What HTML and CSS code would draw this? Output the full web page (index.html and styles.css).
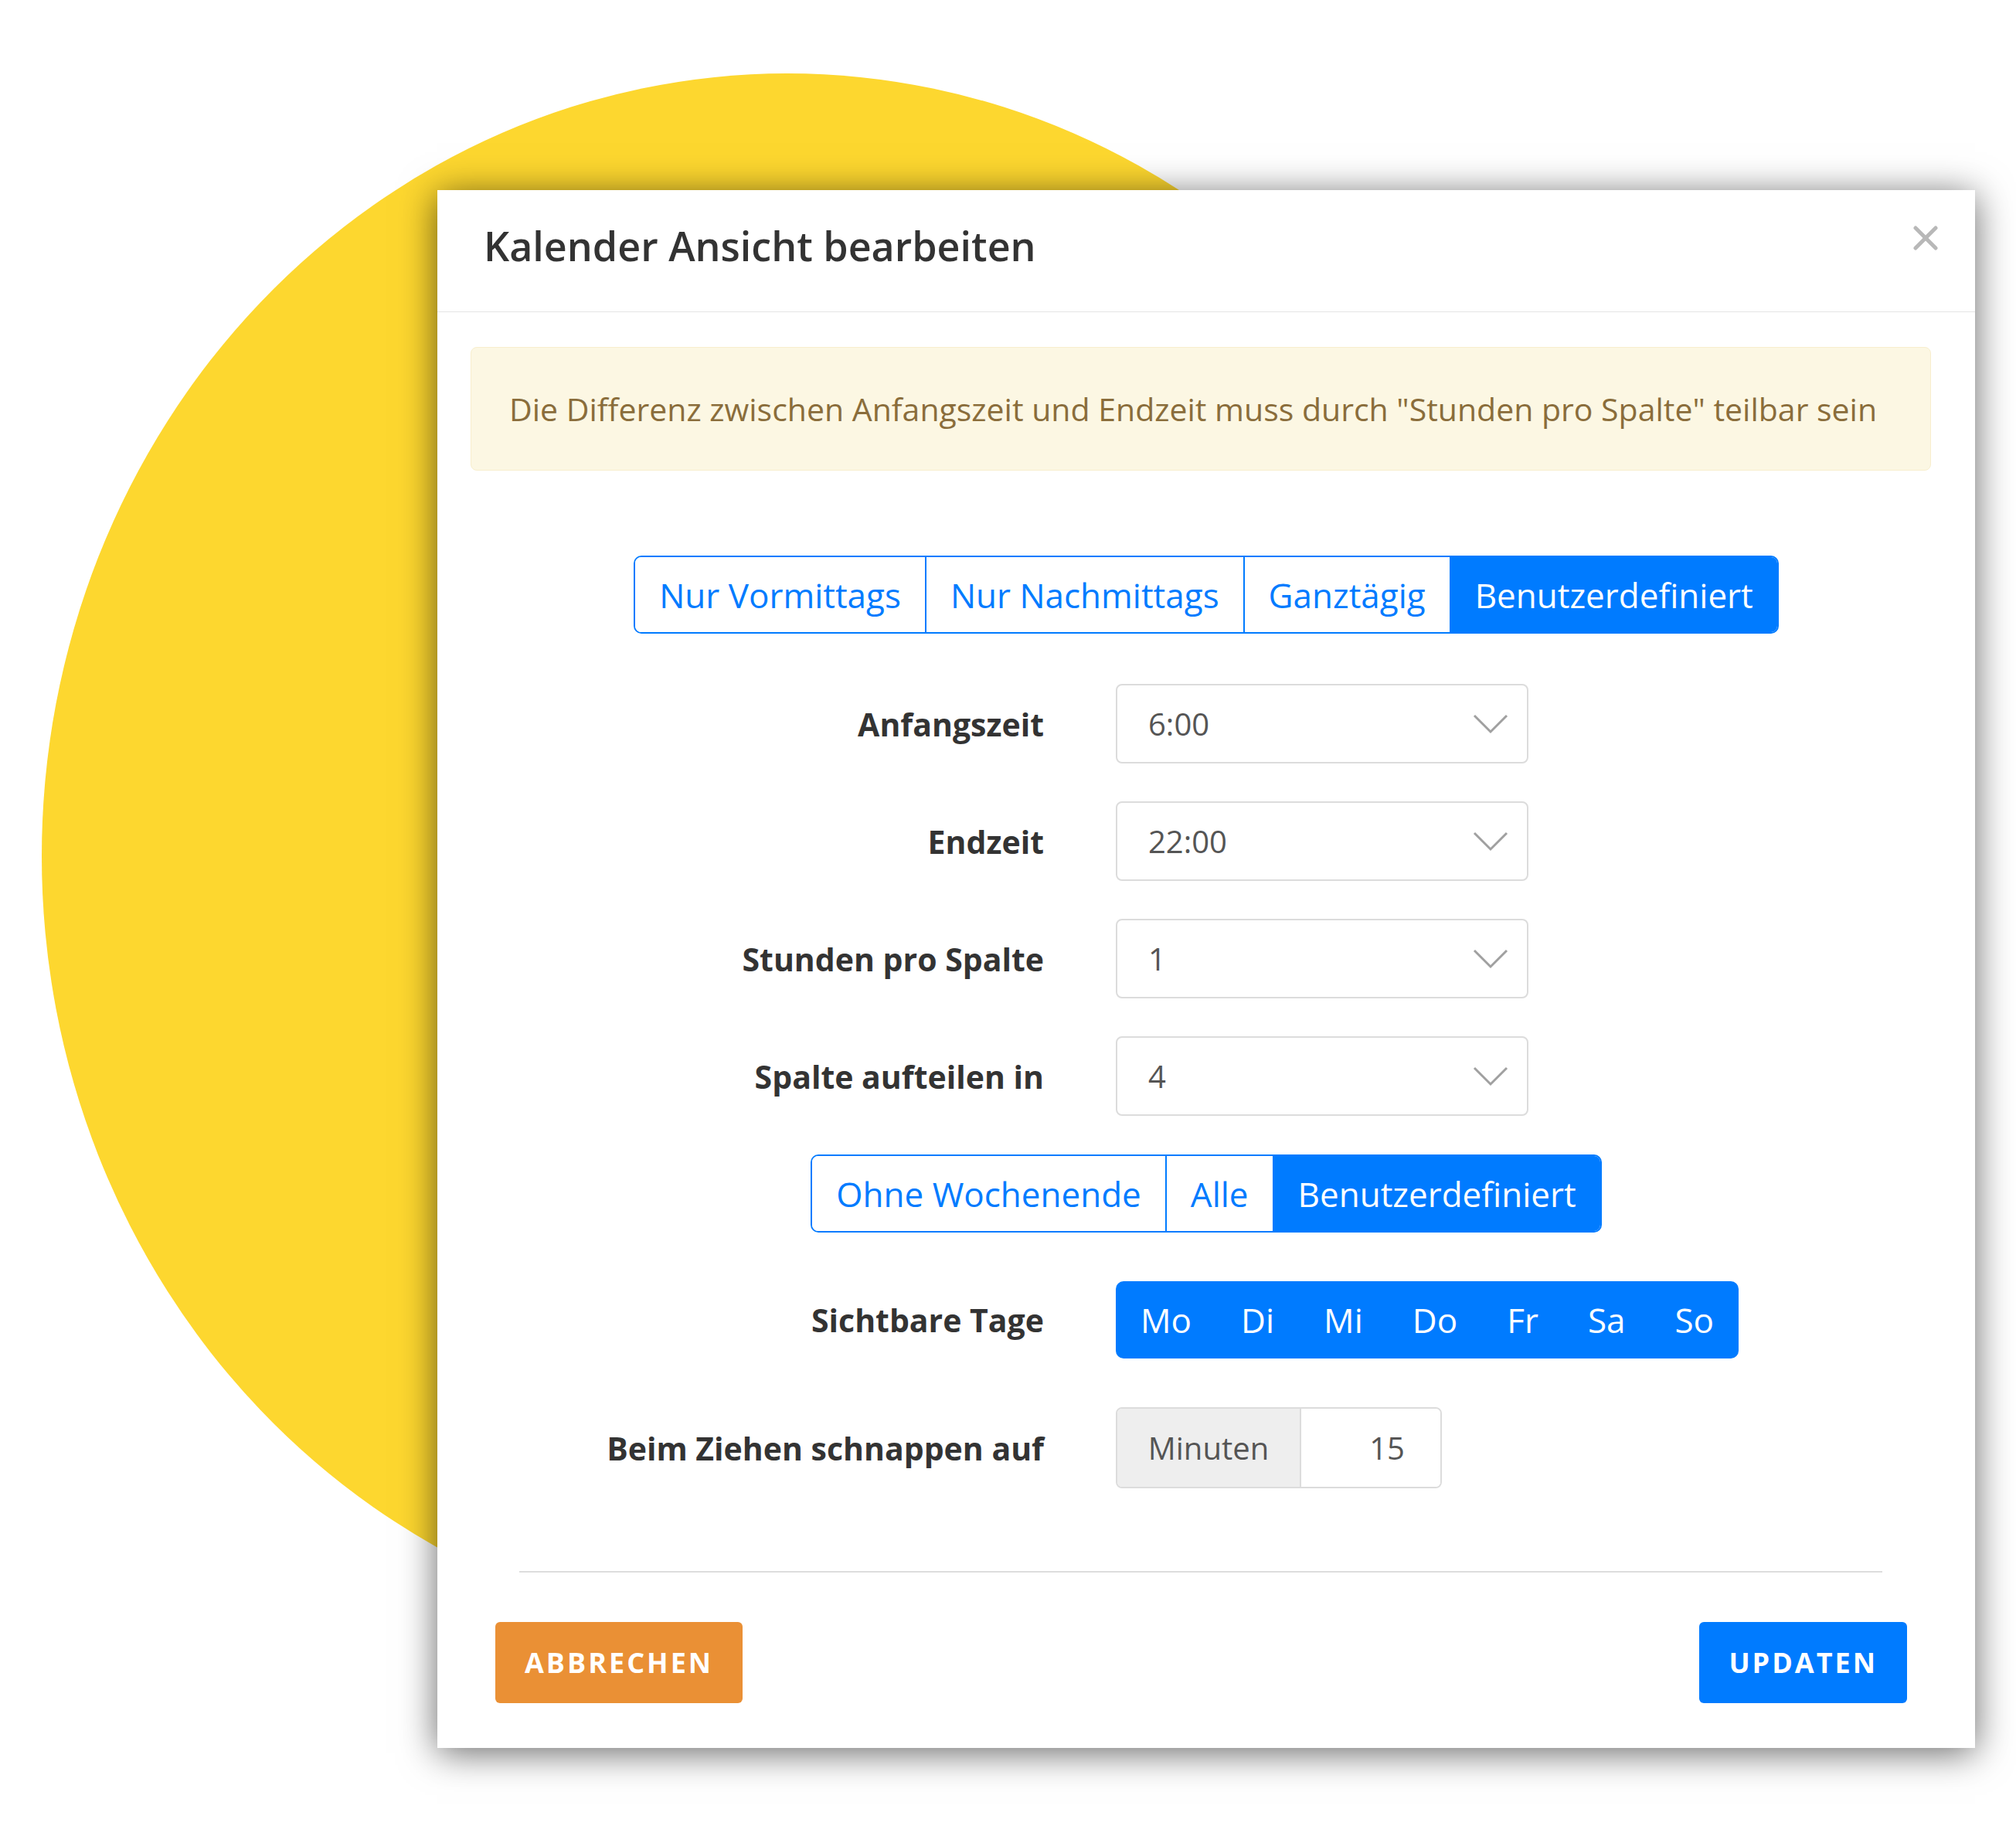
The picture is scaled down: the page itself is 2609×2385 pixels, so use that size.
FILE: index.html
```html
<!DOCTYPE html>
<html lang="de">
<head>
    <meta charset="UTF-8">
    <meta name="viewport" content="width=device-width, initial-scale=1.0">
    <title>Kalender Ansicht bearbeiten</title>
    <link rel="stylesheet" href="styles.css">
</head>
<body>
    <div class="stage">
        <div class="blob"></div>

        <div class="modal">
            <div class="modal-header">
                <h4 class="modal-title">Kalender Ansicht bearbeiten</h4>
                <button class="close" type="button" aria-label="Schließen">
                    <svg width="32" height="32" viewBox="0 0 32 32">
                        <line x1="3" y1="3" x2="29" y2="29" />
                        <line x1="29" y1="3" x2="3" y2="29" />
                    </svg>
                </button>
            </div>

            <div class="modal-body">
                <div class="alert">Die Differenz zwischen Anfangszeit und Endzeit muss durch "Stunden pro Spalte" teilbar sein</div>

                <div class="btn-row presets">
                    <div class="btn-group">
                        <button class="btn-outline">Nur Vormittags</button>
                        <button class="btn-outline">Nur Nachmittags</button>
                        <button class="btn-outline">Ganztägig</button>
                        <button class="btn-outline active">Benutzerdefiniert</button>
                    </div>
                </div>

                <div class="fields">
                    <div class="field">
                        <label>Anfangszeit</label>
                        <div class="select">
                            <span>6:00</span>
                            <svg class="chevron" width="46" height="26" viewBox="0 0 46 26"><polyline points="2,2 23,23 44,2" /></svg>
                        </div>
                    </div>
                    <div class="field">
                        <label>Endzeit</label>
                        <div class="select">
                            <span>22:00</span>
                            <svg class="chevron" width="46" height="26" viewBox="0 0 46 26"><polyline points="2,2 23,23 44,2" /></svg>
                        </div>
                    </div>
                    <div class="field">
                        <label>Stunden pro Spalte</label>
                        <div class="select">
                            <span>1</span>
                            <svg class="chevron" width="46" height="26" viewBox="0 0 46 26"><polyline points="2,2 23,23 44,2" /></svg>
                        </div>
                    </div>
                    <div class="field">
                        <label>Spalte aufteilen in</label>
                        <div class="select">
                            <span>4</span>
                            <svg class="chevron" width="46" height="26" viewBox="0 0 46 26"><polyline points="2,2 23,23 44,2" /></svg>
                        </div>
                    </div>
                </div>

                <div class="btn-row weekmode">
                    <div class="btn-group">
                        <button class="btn-outline">Ohne Wochenende</button>
                        <button class="btn-outline">Alle</button>
                        <button class="btn-outline active">Benutzerdefiniert</button>
                    </div>
                </div>

                <div class="field days-field">
                    <label>Sichtbare Tage</label>
                    <div class="days">
                        <button>Mo</button>
                        <button>Di</button>
                        <button>Mi</button>
                        <button>Do</button>
                        <button>Fr</button>
                        <button>Sa</button>
                        <button>So</button>
                    </div>
                </div>

                <div class="field snap-field">
                    <label>Beim Ziehen schnappen auf</label>
                    <div class="input-group">
                        <span class="addon">Minuten</span>
                        <input type="text" value="15">
                    </div>
                </div>
            </div>

            <div class="modal-footer">
                <hr class="divider">
                <div class="footer-buttons">
                    <button class="btn btn-cancel">Abbrechen</button>
                    <button class="btn btn-primary">Updaten</button>
                </div>
            </div>
        </div>
    </div>
</body>
</html>
```

FILE: styles.css
```css
body {
    margin: 0;
    background: #fff;
    font-family: "Open Sans", "Noto Sans", Arial, sans-serif;
    color: #333;
}
.stage {
    position: relative;
    width: 2609px;
    height: 2385px;
    overflow: hidden;
    padding: 246px 0 0 566px;
    box-sizing: border-box;
}
.blob {
    position: absolute;
    left: 54px;
    top: 95px;
    width: 1930px;
    height: 2026px;
    border-radius: 50%;
    background: #fdd72f;
}
.modal {
    position: relative;
    width: 1990px;
    background: #fff;
    box-shadow: 0 6px 45px rgba(0, 0, 0, 0.6);
}

/* header */
.modal-header {
    height: 157px;
    display: flex;
    align-items: center;
    justify-content: space-between;
    padding: 0 48px 0 60px;
    border-bottom: 1px solid #e5e5e5;
}
.modal-title {
    margin: 0 0 14px 0;
    font-size: 52px;
    font-weight: 600;
    color: #333;
}
.close {
    align-self: flex-start;
    margin-top: 46px;
    padding: 0;
    border: none;
    background: none;
    line-height: 0;
}
.close line {
    stroke: #b8b8b8;
    stroke-width: 5;
    stroke-linecap: round;
}

/* body */
.modal-body {
    padding-top: 45px;
}
.alert {
    margin: 0 57px 0 43px;
    height: 160px;
    box-sizing: border-box;
    display: flex;
    align-items: center;
    padding: 0 49px;
    background: #fcf7e3;
    border: 1px solid #f8eecd;
    border-radius: 8px;
    color: #8a6d3b;
    font-size: 41px;
}
.btn-row {
    display: flex;
    justify-content: center;
}
.presets {
    margin-top: 110px;
}
.weekmode {
    margin-top: 50px;
}
.btn-group {
    display: flex;
    border: 2px solid #007bff;
    border-radius: 10px;
    overflow: hidden;
}
.btn-outline {
    height: 97px;
    padding: 0 31px;
    border: none;
    border-left: 2px solid #007bff;
    background: #fff;
    color: #007bff;
    font-family: inherit;
    font-size: 44px;
}
.btn-outline:first-child {
    border-left: none;
}
.btn-outline.active {
    background: #007bff;
    color: #fff;
}

/* fields */
.fields {
    margin-top: 65px;
}
.field {
    display: grid;
    grid-template-columns: 785px auto;
    column-gap: 93px;
    align-items: center;
    justify-content: start;
}
.field + .field {
    margin-top: 49px;
}
.field label {
    text-align: right;
    font-size: 41px;
    font-weight: 700;
    color: #333;
}
.select {
    width: 534px;
    height: 103px;
    box-sizing: border-box;
    display: flex;
    align-items: center;
    justify-content: space-between;
    padding: 0 24px 0 40px;
    border: 2px solid #dcdcdc;
    border-radius: 8px;
    color: #555;
    font-size: 40px;
}
.chevron polyline {
    fill: none;
    stroke: #a0a0a0;
    stroke-width: 3;
}
.days-field {
    margin-top: 63px;
}
.days {
    display: flex;
    background: #007bff;
    border-radius: 10px;
}
.days button {
    height: 100px;
    padding: 0 32px;
    border: none;
    background: none;
    color: #fff;
    font-family: inherit;
    font-size: 44px;
}
.field.snap-field {
    margin-top: 63px;
}
.input-group {
    display: flex;
    height: 105px;
    box-sizing: border-box;
    border: 2px solid #dcdcdc;
    border-radius: 8px;
    overflow: hidden;
}
.addon {
    width: 236px;
    display: flex;
    align-items: center;
    justify-content: center;
    background: #eee;
    border-right: 2px solid #dcdcdc;
    color: #555;
    font-size: 40px;
}
.input-group input {
    width: 180px;
    box-sizing: border-box;
    border: none;
    padding: 0 46px 0 0;
    text-align: right;
    font-family: inherit;
    font-size: 40px;
    color: #555;
}

/* footer */
.modal-footer {
    padding: 107px 0 58px 0;
}
.divider {
    margin: 0 120px 0 106px;
    border: none;
    height: 2px;
    background: #ddd;
}
.footer-buttons {
    display: flex;
    justify-content: space-between;
    padding: 64px 88px 0 75px;
}
.btn {
    height: 105px;
    padding: 0 38px;
    border: none;
    border-radius: 6px;
    color: #fff;
    font-family: inherit;
    font-size: 36px;
    font-weight: 700;
    letter-spacing: 3px;
    text-transform: uppercase;
}
.btn-cancel {
    background: #ea9035;
}
.btn-primary {
    background: #007bff;
}
```
